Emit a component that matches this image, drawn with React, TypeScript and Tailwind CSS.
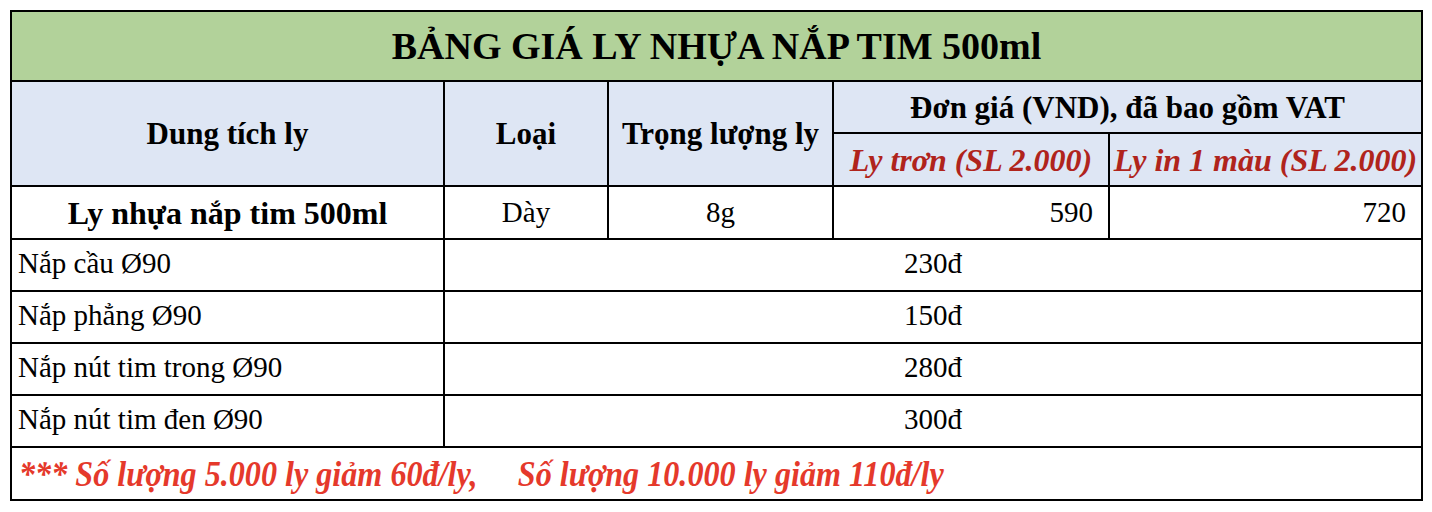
const lids = [
  { name: 'Nắp cầu Ø90', price: '230đ' },
  { name: 'Nắp phẳng Ø90', price: '150đ' },
  { name: 'Nắp nút tim trong Ø90', price: '280đ' },
  { name: 'Nắp nút tim đen Ø90', price: '300đ' },
]

const cell = 'border-2 border-black leading-none'
const head = `${cell} bg-[#dee6f4] text-center text-[31px] font-bold whitespace-nowrap`

const App = () => {
  return (
    <div className="w-[1432px] h-[512px] bg-white pt-[10px] pl-[10px] font-['Liberation_Serif','Times_New_Roman',serif] text-black">
      <table className="table-fixed border-collapse w-[1411px]">
        <colgroup>
          <col className="w-[433px]" />
          <col className="w-[164px]" />
          <col className="w-[225px]" />
          <col className="w-[276px]" />
          <col className="w-[313px]" />
        </colgroup>
        <tbody>
          <tr className="h-[70px]">
            <td colSpan={5} className={`${cell} bg-[#b2d29a] text-center text-[38px] font-bold`}>
              BẢNG GIÁ LY NHỰA NẮP TIM 500ml
            </td>
          </tr>
          <tr className="h-[52px]">
            <td rowSpan={2} className={head}>
              Dung tích ly
            </td>
            <td rowSpan={2} className={head}>
              Loại
            </td>
            <td rowSpan={2} className={head}>
              Trọng lượng ly
            </td>
            <td colSpan={2} className={head}>
              Đơn giá (VND), đã bao gồm VAT
            </td>
          </tr>
          <tr className="h-[53px]">
            <td className={`${head} italic text-[#b0241c] text-[32px]`}>Ly trơn (SL 2.000)</td>
            <td className={`${head} italic text-[#b0241c] text-[32px]`}>Ly in 1 màu (SL 2.000)</td>
          </tr>
          <tr className="h-[53px]">
            <td className={`${cell} text-center text-[32px] font-bold`}>Ly nhựa nắp tim 500ml</td>
            <td className={`${cell} text-center text-[29px]`}>Dày</td>
            <td className={`${cell} text-center text-[29px]`}>8g</td>
            <td className={`${cell} text-right pr-[15px] text-[29px]`}>590</td>
            <td className={`${cell} text-right pr-[15px] text-[29px]`}>720</td>
          </tr>
          {lids.map((lid) => (
            <tr key={lid.name} className="h-[52px]">
              <td className={`${cell} pl-[6px] pb-[4px] text-[29px]`}>{lid.name}</td>
              <td colSpan={4} className={`${cell} pb-[4px] text-center text-[29px]`}>
                {lid.price}
              </td>
            </tr>
          ))}
          <tr className="h-[53px]">
            <td colSpan={5} className={`${cell} pl-[7px] text-[#e5392b] font-bold italic`}>
              <span className="inline-block origin-left scale-x-[0.893] text-[36px] whitespace-pre leading-none">
                {'*** Số lượng 5.000 ly giảm 60đ/ly,     Số lượng 10.000 ly giảm 110đ/ly'}
              </span>
            </td>
          </tr>
        </tbody>
      </table>
    </div>
  )
}

export default App
